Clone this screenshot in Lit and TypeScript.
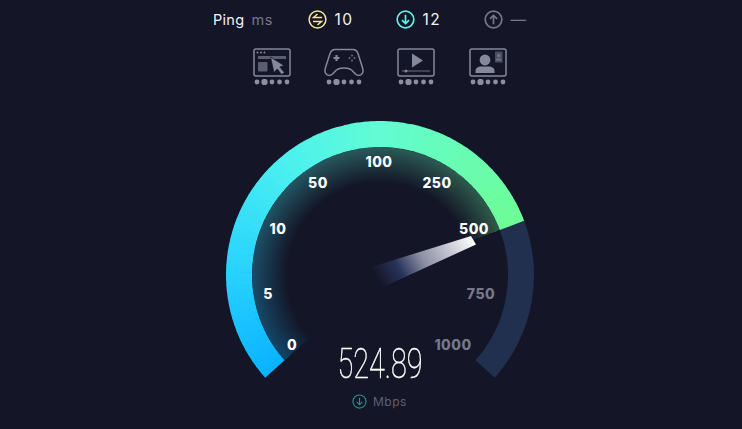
import { LitElement, html, css, svg } from "lit";
import { customElement } from "lit/decorators.js";

const CX = 154, CY = 154, RO = 154, RI = 128;
const START = -131.8, SPLIT = 69.4, END = 131.8;
const STOPS: [number, number[]][] = [
  [0, [10, 178, 255]],
  [0.2, [38, 208, 255]],
  [0.45, [74, 240, 240]],
  [0.64, [96, 252, 214]],
  [0.82, [104, 252, 180]],
  [1, [110, 252, 150]],
];
function colorAt(t: number) {
  for (let i = 1; i < STOPS.length; i++) {
    if (t <= STOPS[i][0]) {
      const [a, ca] = STOPS[i - 1];
      const [b, cb] = STOPS[i];
      const k = (t - a) / (b - a);
      return `rgb(${ca.map((v, j) => Math.round(v + (cb[j] - v) * k)).join(",")})`;
    }
  }
  return "rgb(110,252,150)";
}
function pt(r: number, deg: number) {
  const a = (deg * Math.PI) / 180;
  return `${(CX + r * Math.sin(a)).toFixed(2)} ${(CY - r * Math.cos(a)).toFixed(2)}`;
}
function seg(a: number, b: number) {
  return `M${pt(RO, a)}A${RO} ${RO} 0 0 1 ${pt(RO, b)}L${pt(RI, b)}A${RI} ${RI} 0 0 0 ${pt(RI, a)}Z`;
}
const N = 80;
const segs = Array.from({ length: N }, (_, i) => {
  const a = START + ((SPLIT - START) * i) / N;
  const b = START + ((SPLIT - START) * (i + 1)) / N + (i < N - 1 ? 0.3 : 0);
  return svg`<path d=${seg(a, b)} fill=${colorAt((i + 0.5) / N)}></path>`;
});
const conicStops = Array.from({ length: 11 }, (_, i) => {
  const t = i / 10;
  return `${colorAt(t)} ${((SPLIT - START) * t).toFixed(1)}deg`;
}).join(",");
const glowStyle = `background:conic-gradient(from ${START}deg,${conicStops},transparent ${(SPLIT - START).toFixed(1)}deg)`;

const LABELS: [string, number, number, boolean][] = [
  ["0", 66, 229, true],
  ["5", 42, 178, true],
  ["10", 52, 113, true],
  ["50", 92, 67, true],
  ["100", 153, 46, true],
  ["250", 211, 67, true],
  ["500", 248, 113, true],
  ["750", 255, 178, false],
  ["1000", 227, 229, false],
];

const dots = svg`<g fill="#8d8f9f"><circle cx="3" cy="3" r="2.4"></circle><circle cx="10.5" cy="3" r="3.2"></circle><circle cx="18" cy="3" r="2.4"></circle><circle cx="25.5" cy="3" r="2.4"></circle><circle cx="33" cy="3" r="2.4"></circle></g>`;
const stroke = "#85879a";

const ICONS = [
  svg`<svg width="38" height="29" viewBox="0 0 38 29"><rect x="1" y="1" width="36" height="27" rx="2" fill="none" stroke=${stroke} stroke-width="1.5"></rect>
    <g fill=${stroke}><circle cx="4.5" cy="4.5" r="1"></circle><circle cx="8" cy="4.5" r="1"></circle><circle cx="11.5" cy="4.5" r="1"></circle></g>
    <rect x="5" y="8" width="28" height="3" fill="#5b5d70"></rect><rect x="5" y="14" width="9.5" height="9.5" rx="1" fill="#5b5d70"></rect>
    <path d="M17.5 9L31 17.500L26.800 19L31.500 24.500L28.500 26.500L24.300 21L21 24.500Z" fill=${stroke} stroke="#141526" stroke-width=".7"></path></svg>`,
  svg`<svg width="40" height="29" viewBox="0 0 40 29"><path d="M11 1.500H29C31.500 1.500 33 3 34 5.500L38.600 20C39.800 24.500 38 27.500 34.500 27.500C32 27.500 31 26 29.500 24C27.500 21 25 20 20 20S12.500 21 10.500 24C9 26 8 27.500 5.500 27.500C2 27.500 .2 24.500 1.400 20L6 5.500C7 3 8.500 1.500 11 1.500Z" fill="none" stroke=${stroke} stroke-width="1.500"></path>
    <path d="M12.500 7V13M9.500 10H15.500" stroke=${stroke} stroke-width="2.200" fill="none"></path>
    <g fill="#6c6e81"><circle cx="28" cy="7.500" r="1"></circle><circle cx="28" cy="12.500" r="1"></circle><circle cx="25.500" cy="10" r="1"></circle><circle cx="30.500" cy="10" r="1"></circle></g></svg>`,
  svg`<svg width="38" height="29" viewBox="0 0 38 29"><rect x="1" y="1" width="36" height="27" rx="2" fill="none" stroke=${stroke} stroke-width="1.500"></rect>
    <path d="M15 5.500L26 12.500L15 19.500Z" fill=${stroke}></path>
    <path d="M5 23H33" stroke="#5f6174" stroke-width="1.200"></path><circle cx="9" cy="23" r="1.500" fill=${stroke}></circle></svg>`,
  svg`<svg width="38" height="29" viewBox="0 0 38 29"><rect x="1" y="1" width="36" height="27" rx="2" fill="none" stroke=${stroke} stroke-width="1.500"></rect>
    <circle cx="16" cy="12" r="5.400" fill=${stroke}></circle><path d="M6.500 25V23C6.500 20 9 18.500 12 18.500H20C23 18.500 25.500 20 25.500 23V25Z" fill=${stroke}></path>
    <rect x="26" y="3.500" width="7.500" height="11" fill="#4b4d60"></rect><circle cx="29.700" cy="7.500" r="1.700" fill="#72748a"></circle><path d="M27 12.500C27 10.500 28.500 10.500 29.700 10.500S32.500 10.500 32.500 12.500Z" fill="#72748a"></path></svg>`,
];

@customElement("app-root")
export class AppRoot extends LitElement {
  static styles = css`
    :host {
      display: block;
      width: 742px;
      height: 429px;
      background: #141526;
      overflow: hidden;
      font-family: Inter, "Liberation Sans", sans-serif;
      color: #fff;
    }
    .stats {
      display: flex;
      align-items: center;
      height: 19px;
      padding: 10px 0 0 213px;
      font-size: 14.5px;
      font-weight: 400;
      color: #f2f2f5;
    }
    .ping { letter-spacing: 0.3px; }
    .ms { margin-left: 7px; width: 57px; color: #75778a; letter-spacing: 0.6px; }
    .stat { display: flex; align-items: center; gap: 7px; letter-spacing: 1.6px; font-size: 15.5px; }
    .stat svg { display: block; }
    .s1 { width: 88px; }
    .s2 { width: 88px; }
    .dash { color: #75778a; letter-spacing: 0; }
    .tests {
      display: flex;
      gap: 34px;
      margin: 19px 0 0 253px;
      align-items: flex-start;
    }
    .test { width: 38px; display: flex; flex-direction: column; align-items: center; gap: 2px; }
    .test svg { display: block; flex: none; }
    .gauge-wrap { padding-top: 36px; }
    .gauge {
      position: relative;
      width: 308px;
      height: 290px;
      margin: 0 0 0 226px;
    }
    .glow {
      position: absolute;
      left: 26px;
      top: 26px;
      width: 256px;
      height: 256px;
      border-radius: 50%;
      opacity: 0.3;
      -webkit-mask-image: radial-gradient(circle closest-side, transparent 72%, #000 100%);
      mask-image: radial-gradient(circle closest-side, transparent 72%, #000 100%);
    }
    .dial { position: absolute; left: 0; top: 0; overflow: visible; }
    .dial text { font-size: 14px; font-weight: 800; fill: #fff; text-anchor: middle; letter-spacing: 0.5px; }
    .dial text.off { fill: #77798a; }
    .reading {
      position: absolute;
      left: 0;
      right: 0;
      top: 220px;
      text-align: center;
      font-family: Roboto, sans-serif;
      font-weight: 100;
      font-size: 43px;
      line-height: 44px;
      transform: scaleX(0.67);
      -webkit-text-stroke: 0.5px #fff;
    }
    .unit {
      position: absolute;
      left: 126px;
      top: 273px;
      display: flex;
      align-items: center;
      gap: 6px;
      font-size: 12px;
      letter-spacing: 0.5px;
      color: #5f6173;
    }
    .unit svg { display: block; }
  `;

  private arrow(color: string, size: number, up = false, w = 1.4) {
    const d = up ? "M8 12V4.500M5 7.500L8 4.500L11 7.500" : "M8 4V11.500M5 8.500L8 11.500L11 8.500";
    return html`<svg width=${size} height=${size} viewBox="0 0 16 16" fill="none" stroke=${color} stroke-width=${w}>
      <circle cx="8" cy="8" r="7"></circle><path d=${d}></path></svg>`;
  }

  render() {
    return html`
      <div class="stats">
        <span class="ping">Ping</span><span class="ms">ms</span>
        <div class="stat s1">
          <svg width="19" height="19" viewBox="0 0 19 19" fill="none" stroke="#f3ea8c" stroke-width="1.500">
            <circle cx="9.500" cy="9.500" r="8.400"></circle>
            <path d="M14 7.500H5.500L9.500 4M5 11.500H13.500L9.500 15"></path>
          </svg>
          <span>10</span>
        </div>
        <div class="stat s2">
          ${this.arrow("#5ff2e4", 19)}
          <span>12</span>
        </div>
        <div class="stat">
          ${this.arrow("#75778a", 19, true)}
          <span class="dash">—</span>
        </div>
      </div>
      <div class="tests">
        ${ICONS.map(
          (ic) => html`<div class="test">${ic}
            <svg width="36" height="6" viewBox="0 0 36 6">${dots}</svg></div>`
        )}
      </div>
      <div class="gauge-wrap">
        <div class="gauge">
          <div class="glow" style=${glowStyle}></div>
          <svg class="dial" width="308" height="270" viewBox="0 0 308 270">
            <defs>
              <linearGradient id="ng" gradientUnits="userSpaceOnUse" x1="247" y1="118" x2="156.500" y2="169">
                <stop offset="0" stop-color="#ffffff"></stop>
                <stop offset="0.52" stop-color="#8c8ea4"></stop>
                <stop offset="0.76" stop-color="#27335a"></stop>
                <stop offset="1" stop-color="#141526"></stop>
              </linearGradient>
            </defs>
            <path d=${seg(SPLIT, END)} fill="#22304f"></path>
            ${segs}
            <path d="M245 115L250 123.500L155 167L139 148Z" fill="url(#ng)"></path>
            ${LABELS.map(
              ([t, x, y, on]) => svg`<text x=${x} y=${y} class=${on ? "" : "off"}>${t}</text>`
            )}
          </svg>
          <div class="reading">524.89</div>
          <div class="unit">${this.arrow("#2f8f8f", 15, false, 1.2)}<span>Mbps</span></div>
        </div>
      </div>
    `;
  }
}
